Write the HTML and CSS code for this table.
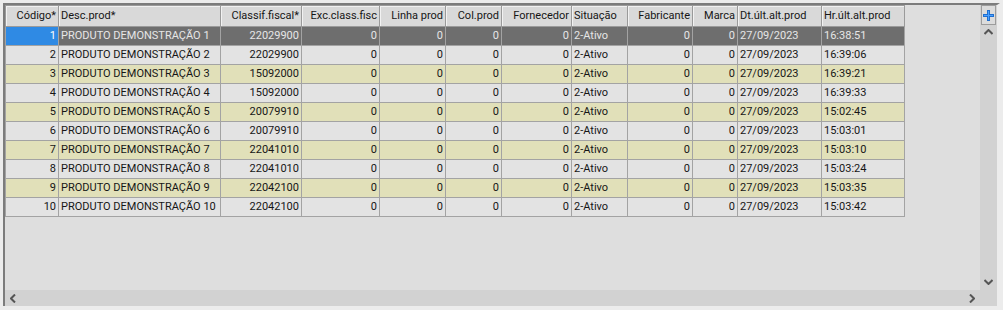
FILE: index.html
```html
<!DOCTYPE html>
<html>
<head>
<meta charset="utf-8">
<link rel="stylesheet" href="styles.css">
</head>
<body>
<div class="window">
  <div class="viewport">
    <table class="grid">
      <colgroup>
        <col style="width:53px"><col style="width:162px"><col style="width:81px"><col style="width:78px"><col style="width:66px"><col style="width:56px"><col style="width:70px"><col style="width:56px"><col style="width:65px"><col style="width:45px"><col style="width:84px"><col style="width:83px">
      </colgroup>
      <thead>
        <tr>
          <th class="r">Código*</th><th>Desc.prod*</th><th class="r">Classif.fiscal*</th><th class="r">Exc.class.fisc</th><th class="r">Linha prod</th><th class="r">Col.prod</th><th class="r">Fornecedor</th><th>Situação</th><th class="r">Fabricante</th><th class="r">Marca</th><th>Dt.últ.alt.prod</th><th>Hr.últ.alt.prod</th>
        </tr>
      </thead>
      <tbody>
        <tr class="sel"><td class="r cur">1</td><td>PRODUTO DEMONSTRAÇÃO 1</td><td class="r">22029900</td><td class="r">0</td><td class="r">0</td><td class="r">0</td><td class="r">0</td><td>2-Ativo</td><td class="r">0</td><td class="r">0</td><td>27/09/2023</td><td>16:38:51</td></tr>
        <tr class="g"><td class="r">2</td><td>PRODUTO DEMONSTRAÇÃO 2</td><td class="r">22029900</td><td class="r">0</td><td class="r">0</td><td class="r">0</td><td class="r">0</td><td>2-Ativo</td><td class="r">0</td><td class="r">0</td><td>27/09/2023</td><td>16:39:06</td></tr>
        <tr class="y"><td class="r">3</td><td>PRODUTO DEMONSTRAÇÃO 3</td><td class="r">15092000</td><td class="r">0</td><td class="r">0</td><td class="r">0</td><td class="r">0</td><td>2-Ativo</td><td class="r">0</td><td class="r">0</td><td>27/09/2023</td><td>16:39:21</td></tr>
        <tr class="g"><td class="r">4</td><td>PRODUTO DEMONSTRAÇÃO 4</td><td class="r">15092000</td><td class="r">0</td><td class="r">0</td><td class="r">0</td><td class="r">0</td><td>2-Ativo</td><td class="r">0</td><td class="r">0</td><td>27/09/2023</td><td>16:39:33</td></tr>
        <tr class="y"><td class="r">5</td><td>PRODUTO DEMONSTRAÇÃO 5</td><td class="r">20079910</td><td class="r">0</td><td class="r">0</td><td class="r">0</td><td class="r">0</td><td>2-Ativo</td><td class="r">0</td><td class="r">0</td><td>27/09/2023</td><td>15:02:45</td></tr>
        <tr class="g"><td class="r">6</td><td>PRODUTO DEMONSTRAÇÃO 6</td><td class="r">20079910</td><td class="r">0</td><td class="r">0</td><td class="r">0</td><td class="r">0</td><td>2-Ativo</td><td class="r">0</td><td class="r">0</td><td>27/09/2023</td><td>15:03:01</td></tr>
        <tr class="y"><td class="r">7</td><td>PRODUTO DEMONSTRAÇÃO 7</td><td class="r">22041010</td><td class="r">0</td><td class="r">0</td><td class="r">0</td><td class="r">0</td><td>2-Ativo</td><td class="r">0</td><td class="r">0</td><td>27/09/2023</td><td>15:03:10</td></tr>
        <tr class="g"><td class="r">8</td><td>PRODUTO DEMONSTRAÇÃO 8</td><td class="r">22041010</td><td class="r">0</td><td class="r">0</td><td class="r">0</td><td class="r">0</td><td>2-Ativo</td><td class="r">0</td><td class="r">0</td><td>27/09/2023</td><td>15:03:24</td></tr>
        <tr class="y"><td class="r">9</td><td>PRODUTO DEMONSTRAÇÃO 9</td><td class="r">22042100</td><td class="r">0</td><td class="r">0</td><td class="r">0</td><td class="r">0</td><td>2-Ativo</td><td class="r">0</td><td class="r">0</td><td>27/09/2023</td><td>15:03:35</td></tr>
        <tr class="g"><td class="r">10</td><td>PRODUTO DEMONSTRAÇÃO 10</td><td class="r">22042100</td><td class="r">0</td><td class="r">0</td><td class="r">0</td><td class="r">0</td><td>2-Ativo</td><td class="r">0</td><td class="r">0</td><td>27/09/2023</td><td>15:03:42</td></tr>
      </tbody>
    </table>
  </div>
  <div class="vbar">
    <div class="plus">
      <svg width="11" height="11" viewBox="0 0 11 11"><path d="M4 0h3v4h4v3H7v4H4V7H0V4h4z" fill="#1f6fd0"/><path d="M5 1h1v4h4v1H6v4H5V6H1V5h4z" fill="#4aa0ff"/></svg>
    </div>
    <div class="arrow up"><svg width="9" height="6" viewBox="0 0 9 6"><path d="M0.5 5L4.5 1L8.5 5" fill="none" stroke="#555" stroke-width="2"/></svg></div>
    <div class="track"></div>
    <div class="arrow down"><svg width="9" height="6" viewBox="0 0 9 6"><path d="M0.5 1L4.5 5L8.5 1" fill="none" stroke="#555" stroke-width="2"/></svg></div>
  </div>
  <div class="hbar">
    <div class="harrow"><svg width="6" height="9" viewBox="0 0 6 9"><path d="M5 0.5L1 4.5L5 8.5" fill="none" stroke="#555" stroke-width="2"/></svg></div>
    <div class="htrack"></div>
    <div class="harrow"><svg width="6" height="9" viewBox="0 0 6 9"><path d="M1 0.5L5 4.5L1 8.5" fill="none" stroke="#555" stroke-width="2"/></svg></div>
  </div>
  <div class="corner"></div>
</div>
</body>
</html>
```

FILE: styles.css
```css
html, body {
  margin: 0;
  padding: 0;
  background: #ececec;
  width: 1003px;
  height: 310px;
  overflow: hidden;
}
.window {
  margin: 3px 0 0 3px;
  width: 997px;
  height: 303px;
  box-sizing: border-box;
  border-top: 2px solid #7c7c7c;
  border-left: 2px solid #7c7c7c;
  border-right: 3px solid #ececec;
  display: grid;
  grid-template-columns: 1fr 17px;
  grid-template-rows: 1fr 16px;
  background: #dedede;
  font-family: Roboto, "Liberation Sans", sans-serif;
  font-size: 11px;
  color: #161616;
}
.viewport {
  background: #dedede;
  overflow: hidden;
}
.grid {
  border-collapse: collapse;
  table-layout: fixed;
  width: 900px;
}
.grid th, .grid td {
  border: 1px solid #a3a3a3;
  padding: 0 2px;
  height: 18px;
  line-height: 18px;
  white-space: nowrap;
  overflow: hidden;
  text-align: left;
  font-weight: normal;
}
.grid th {
  background: #d9d9d9;
  height: 20px;
  border-color: #9a9a9a;
  color: #161616;
  box-shadow: inset 1px 1px 0 #f2f2f2;
}
.grid .r { text-align: right; }
.grid tr.g td { background: #e3e3e3; }
.grid tr.y td { background: #e1e0b9; }
.grid tr.sel td { background: #6e6e6e; color: #e6e6e6; }
.grid tr.sel td.cur { background: #2f8ae4; color: #ffffff; }
.vbar {
  background: #d2d2d2;
  display: flex;
  flex-direction: column;
  align-items: center;
}
.plus {
  width: 15px;
  height: 20px;
  box-sizing: border-box;
  border: 1px solid #9c9c9c;
  background: #dcdcdc;
  display: flex;
  align-items: center;
  justify-content: center;
}
.arrow {
  height: 14px;
  display: flex;
  align-items: center;
  justify-content: center;
}
.arrow.down { height: 16px; }
.track { flex: 1; }
.hbar {
  background: #d2d2d2;
  display: flex;
  align-items: center;
  padding: 0 3px;
}
.htrack { flex: 1; }
.harrow {
  width: 10px;
  display: flex;
  justify-content: center;
}
.corner { background: #d2d2d2; }
```
